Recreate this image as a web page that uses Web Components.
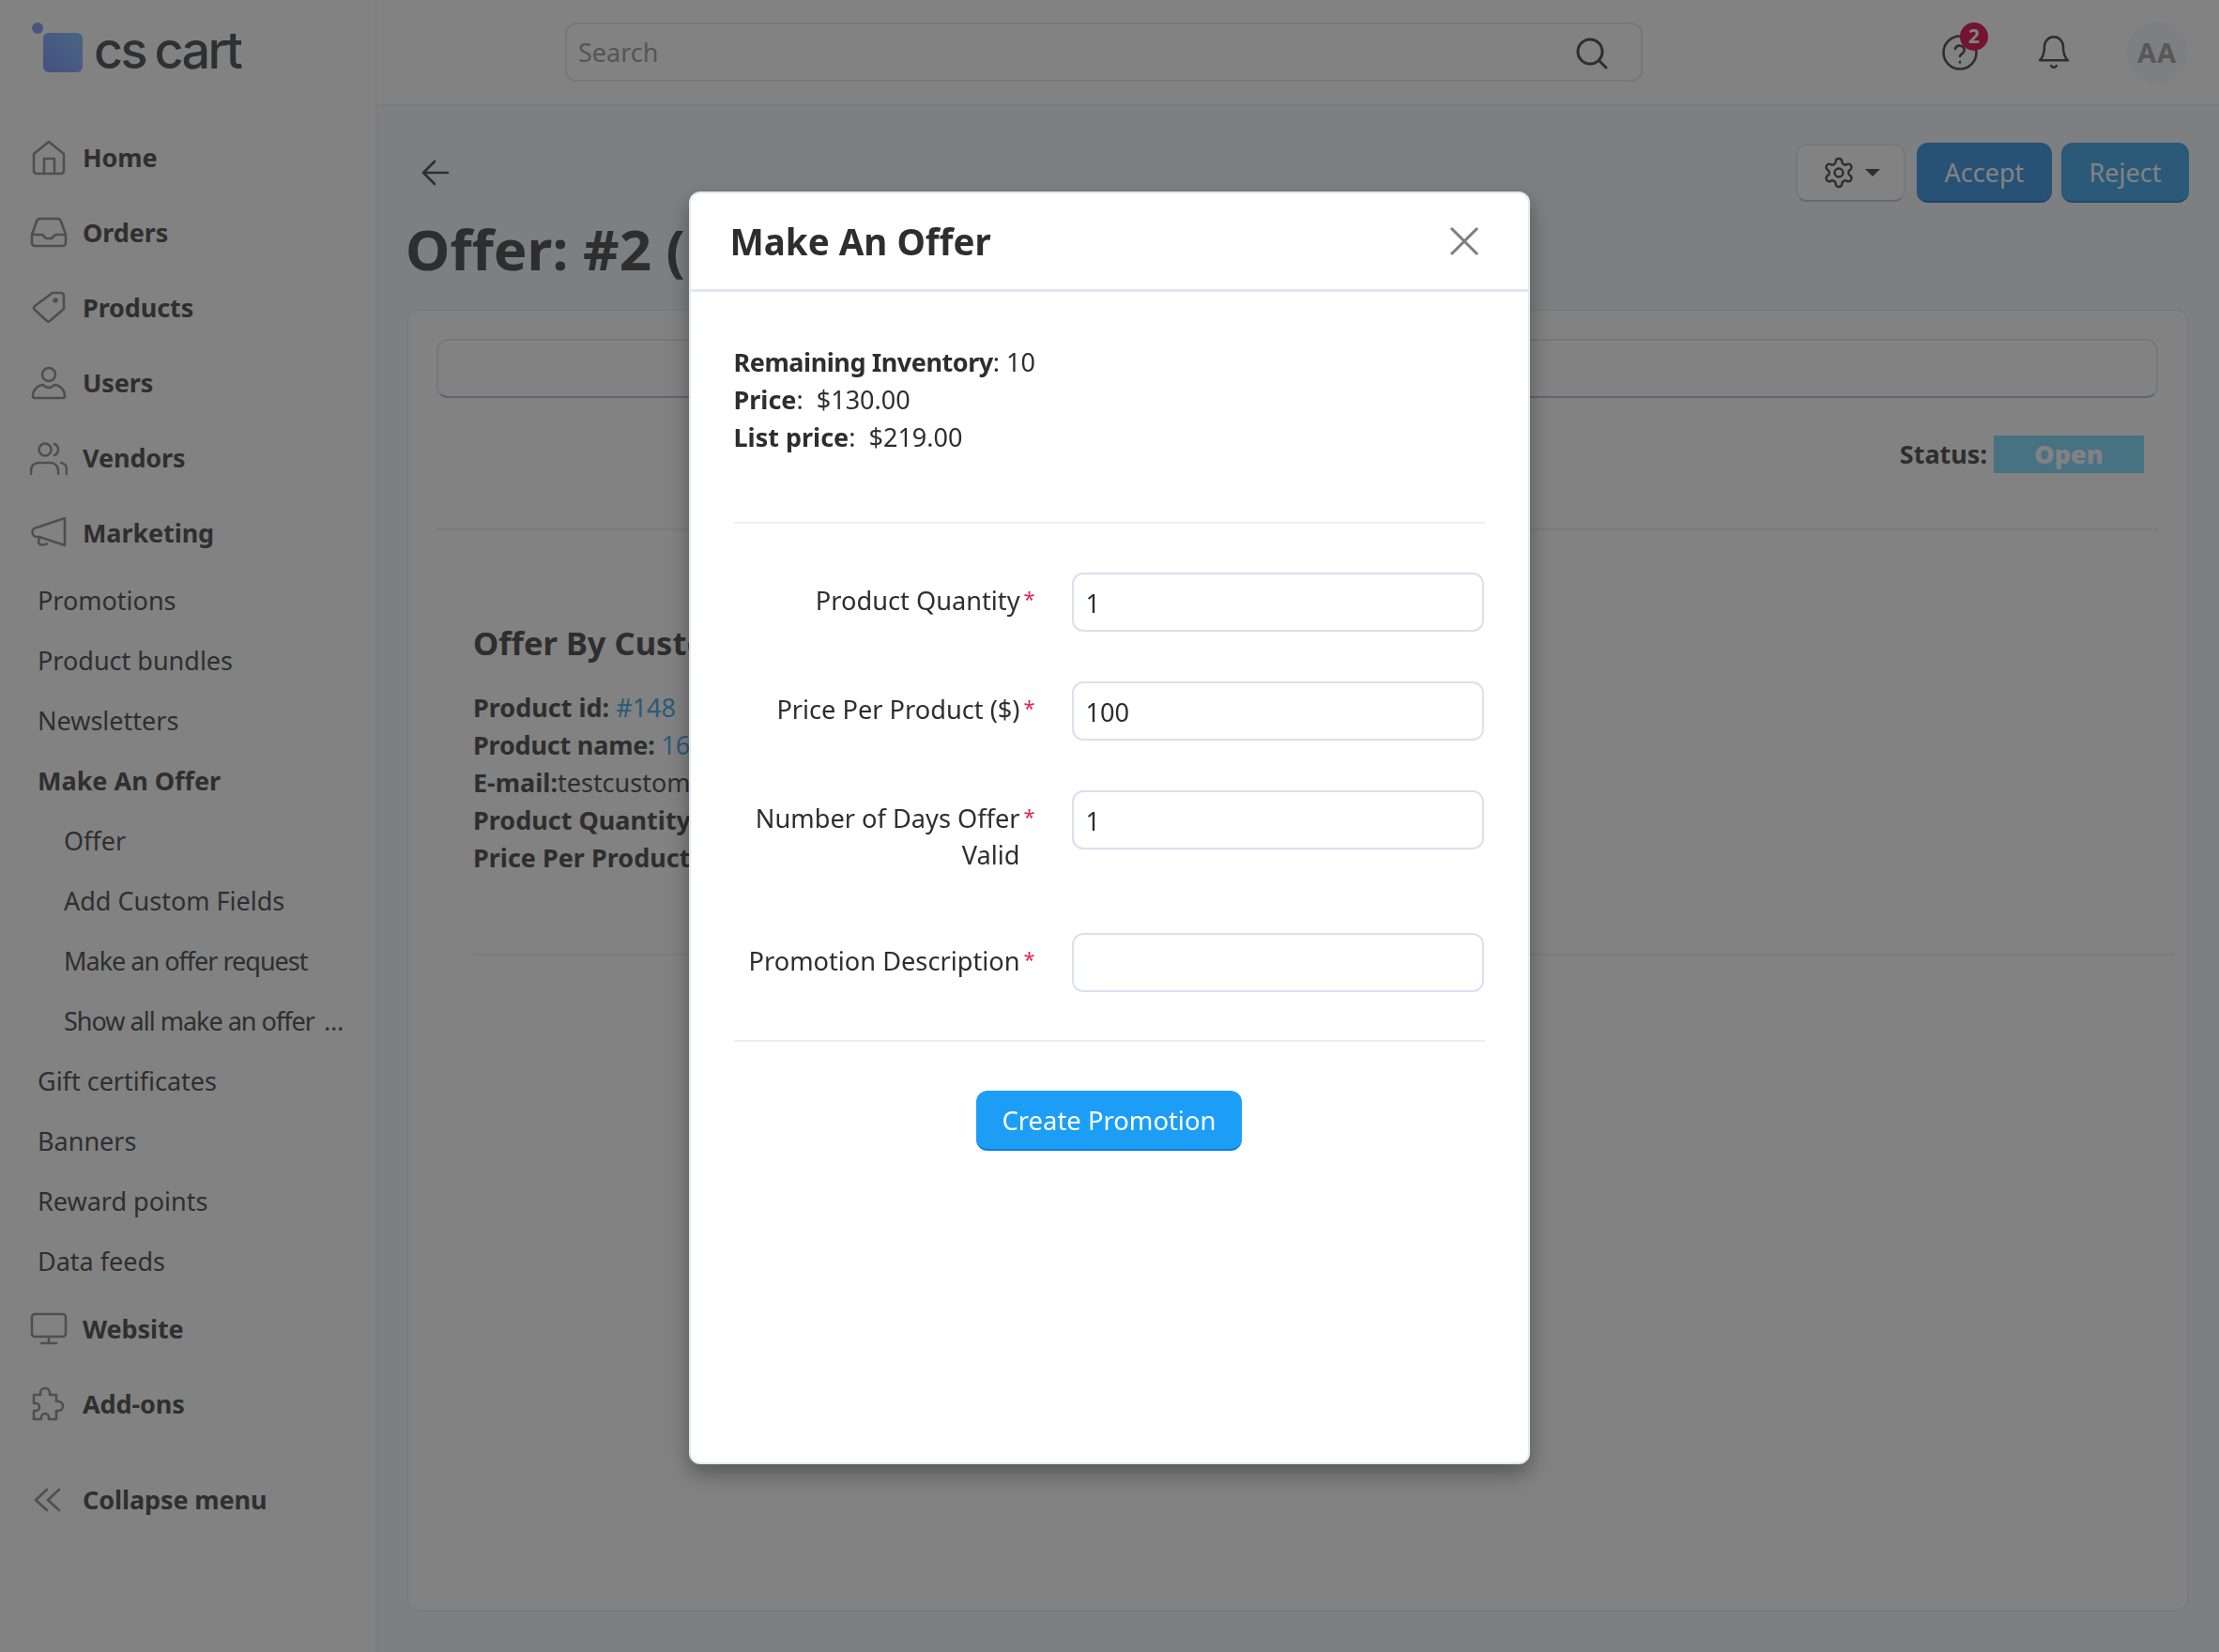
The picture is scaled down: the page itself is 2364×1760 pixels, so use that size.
<!DOCTYPE html>
<html lang="en">
<head>
<meta charset="utf-8">
<title>Make An Offer</title>
<style>
  html, body { margin: 0; height: 100%; overflow: hidden; }
  body { font-family: "Noto Sans", "Open Sans", sans-serif; color: #5a5a5a; background: #f5f9fd; }
</style>
</head>
<body>
<cs-app></cs-app>
<script>
const ICONS = {
  home: '<path d="M4 16 20 3l16 13v18a3 3 0 0 1-3 3H7a3 3 0 0 1-3-3Z"/><path d="M15 37V21h11v16"/>',
  orders: '<path d="M2 22v9a3 3 0 0 0 3 3h30a3 3 0 0 0 3-3v-9L33 8a4 4 0 0 0-4-3H11a4 4 0 0 0-4 3Z"/><path d="M2 22h11l4 4h6l4-4h11"/>',
  tag: '<path d="M5 18 24 4h9a3 3 0 0 1 3 3v14L21 34a2.4 2.4 0 0 1-3 0L5 22a2.6 2.6 0 0 1 0-4Z"/><circle cx="27" cy="12" r="1.4" fill="#a0a0a0"/>',
  user: '<circle cx="20" cy="11" r="7"/><path d="M5 36a2 2 0 0 1-2-2c0-7 6-12 11-12 2 2 4 3 6 3s4-1 6-3c5 0 11 5 11 12a2 2 0 0 1-2 2Z"/>',
  users: '<circle cx="16" cy="11" r="6.5"/><path d="M26 5a6.5 6.5 0 0 1 0 12"/><path d="M1 37v-4a8 8 0 0 1 8-8h13a8 8 0 0 1 8 8v4"/><path d="M33 25a7 7 0 0 1 6 7v5"/>',
  megaphone: '<path d="M37 4v29L10 24H8a5 5 0 0 1-1-10l2-.5Z"/><path d="M10 24.500l-1 4q0 4 4 4l5-1"/>',
  monitor: '<rect x="2" y="4" width="36" height="24" rx="3"/><path d="M20 28v7M12 35h16"/>',
  puzzle: '<path d="M4 10h7V8a5 5 0 0 1 10 0v2h7v7h2a5 5 0 0 1 0 10h-2v9h-8v-2a4 4 0 0 0-8 0v2H4v-9h2a4 4 0 0 0 0-8H4Z"/>',
  collapse: '<path d="M18 9 6 20l12 11M31 9 19 20l12 11"/>'
};

class CsNavItem extends HTMLElement {
  connectedCallback() {
    const icon = this.getAttribute('icon');
    this.attachShadow({ mode: 'open' }).innerHTML = `
      <style>
        :host { display: flex; align-items: center; height: 80px; padding-left: 32px; font-size: 27px; font-weight: 700; color: #5c5c5c; letter-spacing: -.1px; }
        svg { width: 40px; height: 40px; margin-right: 16px; fill: none; stroke: #9c9c9c; stroke-width: 2.6; stroke-linejoin: round; stroke-linecap: round; }
        span { padding-bottom: 2px; }
      </style>
      <svg viewBox="0 0 40 40">${ICONS[icon]}</svg><span><slot></slot></span>`;
  }
}
customElements.define('cs-nav-item', CsNavItem);

class CsSubItem extends HTMLElement {
  connectedCallback() {
    this.attachShadow({ mode: 'open' }).innerHTML = `
      <style>
        :host { display: flex; align-items: center; box-sizing: border-box; height: 64px; padding: 0 0 2px 40px; font-size: 27px; color: #5c5c5c; white-space: nowrap; }
        :host([nested]) { padding-left: 68px; }
        :host([active]) { font-weight: 700; }
        :host([tight]) { letter-spacing: -1px; }
      </style>
      <slot></slot>`;
  }
}
customElements.define('cs-sub-item', CsSubItem);

class CsSidebar extends HTMLElement {
  connectedCallback() {
    this.attachShadow({ mode: 'open' }).innerHTML = `
      <style>
        :host { display: block; box-sizing: border-box; width: 401px; height: 100%; background: #fff; border-right: 1px solid #f0f2f5; }
        .logo { display: flex; align-items: center; gap: 11px; height: 128px; box-sizing: border-box; padding: 0 0 22px 33px; }
        .logo svg { width: 56px; height: 58px; }
        .logo span { font: 500 54px "Inter", sans-serif; letter-spacing: -2.700px; word-spacing: -2px; color: #5b5e63; line-height: 1; margin-top: 1px; }
        .ell { letter-spacing: 1px; margin-left: 4px; }
        .collapse { margin-top: 22px; }
      </style>
      <div class="logo">
        <svg viewBox="0 0 56 58">
          <defs><linearGradient id="lg" x1="0" y1="1" x2="1" y2="0"><stop offset="0" stop-color="#8a9cff"/><stop offset="1" stop-color="#8ec8ff"/></linearGradient></defs>
          <circle cx="7" cy="6" r="6" fill="#8fa8f8"/>
          <rect x="13" y="11" width="42" height="42" rx="6" fill="url(#lg)"/>
        </svg>
        <span>cs cart</span>
      </div>
      <nav>
        <cs-nav-item icon="home">Home</cs-nav-item>
        <cs-nav-item icon="orders">Orders</cs-nav-item>
        <cs-nav-item icon="tag">Products</cs-nav-item>
        <cs-nav-item icon="user">Users</cs-nav-item>
        <cs-nav-item icon="users">Vendors</cs-nav-item>
        <cs-nav-item icon="megaphone">Marketing</cs-nav-item>
        <cs-sub-item>Promotions</cs-sub-item>
        <cs-sub-item>Product bundles</cs-sub-item>
        <cs-sub-item>Newsletters</cs-sub-item>
        <cs-sub-item active>Make An Offer</cs-sub-item>
        <cs-sub-item nested>Offer</cs-sub-item>
        <cs-sub-item nested>Add Custom Fields</cs-sub-item>
        <cs-sub-item nested tight>Make an offer request</cs-sub-item>
        <cs-sub-item nested tight>Show all make an offer&nbsp;<span class="ell">…</span></cs-sub-item>
        <cs-sub-item>Gift certificates</cs-sub-item>
        <cs-sub-item>Banners</cs-sub-item>
        <cs-sub-item>Reward points</cs-sub-item>
        <cs-sub-item>Data feeds</cs-sub-item>
        <cs-nav-item icon="monitor">Website</cs-nav-item>
        <cs-nav-item icon="puzzle">Add-ons</cs-nav-item>
        <cs-nav-item class="collapse" icon="collapse">Collapse menu</cs-nav-item>
      </nav>`;
  }
}
customElements.define('cs-sidebar', CsSidebar);

class CsTopbar extends HTMLElement {
  connectedCallback() {
    this.attachShadow({ mode: 'open' }).innerHTML = `
      <style>
        :host { display: flex; align-items: center; box-sizing: border-box; height: 113px; padding: 0 33px 0 201px; background: #fff; border-bottom: 2px solid #f2f4f7; }
        .search { display: flex; align-items: center; justify-content: space-between; box-sizing: border-box; width: 1148px; height: 63px; padding: 0 33px 0 12px; border: 2px solid #e6eaef; border-radius: 12px; font-size: 27px; color: #a8a8a8; }
        .search svg { width: 40px; height: 40px; fill: none; stroke: #5a5a5a; stroke-width: 3; stroke-linecap: round; }
        .tools { display: flex; align-items: center; margin-left: auto; }
        .help { position: relative; width: 40px; height: 40px; margin-right: 60px; }
        .help svg, .bell { display: block; width: 40px; height: 40px; fill: none; stroke: #5a5a5a; stroke-width: 2.6; stroke-linecap: round; stroke-linejoin: round; }
        .help b { position: absolute; top: -12px; right: -10px; display: grid; place-items: center; width: 30px; height: 30px; border-radius: 50%; background: #e1285f; color: #fff; font-size: 21px; line-height: 1; }
        .bell { stroke-width: 1.500; }
        .avatar { display: grid; place-items: center; width: 66px; height: 66px; margin-left: 57px; border-radius: 50%; background: #f7fafb; color: #adadad; font: 700 29px "Noto Sans", sans-serif; letter-spacing: 1px; }
      </style>
      <div class="search"><span>Search</span>
        <svg viewBox="0 0 40 40"><circle cx="19" cy="19" r="13"/><path d="m29 29 7 7"/></svg>
      </div>
      <div class="tools">
        <div class="help">
          <svg viewBox="0 0 40 40"><circle cx="20" cy="20" r="17.500"/><path d="M15 16a5 5 0 0 1 9.700 1.500c0 3.500-4.700 4-4.700 6.500"/><path d="M20 30v.5"/></svg>
          <b>2</b>
        </div>
        <svg class="bell" viewBox="0 0 24 24"><path d="M6 8a6 6 0 0 1 12 0c0 7 3 9 3 9H3s3-2 3-9"/><path d="M10.300 20.500a1.940 1.940 0 0 0 3.400 0"/></svg>
        <div class="avatar">AA</div>
      </div>`;
  }
}
customElements.define('cs-topbar', CsTopbar);

class CsButton extends HTMLElement {
  connectedCallback() {
    this.attachShadow({ mode: 'open' }).innerHTML = `
      <style>
        :host { display: inline-flex; align-items: center; justify-content: center; box-sizing: border-box; height: 64px; padding: 0 28px; border-radius: 12px; background: #2bb0ff; border-bottom: 2px solid #1a8ae8; color: #fff; font-size: 27px; white-space: nowrap; }
        :host([variant="accept"]) { background: #4fa0e8; border-bottom-color: #3f88d0; width: 144px; padding: 0; }
        :host([variant="reject"]) { background: #55b0ee; border-bottom-color: #4590d8; width: 136px; padding: 0; }
        :host([variant="create"]) { background: #1c9ef7; border-bottom: 2px solid #0b7de0; width: 283px; padding: 0; font-size: 27.400px; }
      </style>
      <slot></slot>`;
  }
}
customElements.define('cs-button', CsButton);

class CsOfferPage extends HTMLElement {
  connectedCallback() {
    this.attachShadow({ mode: 'open' }).innerHTML = `
      <style>
        :host { display: block; box-sizing: border-box; padding: 39px 32px 0; height: calc(100% - 113px); }
        .bar { display: flex; align-items: center; gap: 10px; height: 64px; }
        .back { width: 40px; height: 40px; margin: 0 auto 0 10px; fill: none; stroke: #5a5a5a; stroke-width: 2.6; stroke-linecap: round; stroke-linejoin: round; }
        .gear { display: flex; align-items: center; justify-content: center; gap: 10px; box-sizing: border-box; width: 117px; height: 62px; margin-right: 2px; background: #fff; border: 2px solid #e8ebef; border-bottom-color: #c9d0de; border-radius: 12px; }
        .gear svg { width: 36px; height: 36px; fill: none; stroke: #5a5a5a; stroke-width: 1.600; }
        .gear i { border: 8px solid transparent; border-top-color: #5a5a5a; border-bottom: 0; }
        h1 { margin: 0 0 0 -1px; height: 49px; font-size: 60px; line-height: 98px; font-weight: 700; color: #5a5a5a; white-space: nowrap; }
        .gap { height: 64px; }
        .card { box-sizing: border-box; height: 1388px; padding: 30px 31px 30px 30px; background: #fff; border: 2px solid #eef1f5; border-radius: 14px; }
        .box { height: 63px; box-sizing: border-box; border: 2px solid #e6e9ee; border-bottom-color: #bcc6dc; border-radius: 12px; }
        .status { display: flex; justify-content: flex-end; align-items: center; gap: 7px; margin-top: 40px; padding: 0 15px 59px 0; border-bottom: 2px solid #f0f2f5; font-size: 27px; font-weight: 700; color: #5a5a5a; }
        .status span { padding-bottom: 2px; }
        .status b { display: grid; place-items: center; box-sizing: border-box; width: 160px; height: 40px; padding-bottom: 2px; background: #8ce0ff; color: #fff; }
        .detail { margin: 0 -16px 0 39px; padding: 98px 0 82px; border-bottom: 2px solid #f0f2f5; font-size: 27px; line-height: 40px; color: #5a5a5a; white-space: nowrap; }
        .detail .name { letter-spacing: -.2px; }
        h2 { margin: 0 0 27px; font-size: 34.500px; line-height: 44px; font-weight: 700; }
        a { color: #55b0ee; text-decoration: none; }
      </style>
      <div class="bar">
        <svg class="back" viewBox="0 0 40 40"><path d="M34 20H8M20 8 8 20l12 12"/></svg>
        <div class="gear">
          <svg viewBox="0 0 24 24"><path d="M12.220 2h-.44a2 2 0 0 0-2 2v.18a2 2 0 0 1-1 1.730l-.43.25a2 2 0 0 1-2 0l-.15-.08a2 2 0 0 0-2.730.73l-.22.38a2 2 0 0 0 .73 2.730l.15.1a2 2 0 0 1 1 1.720v.51a2 2 0 0 1-1 1.740l-.15.09a2 2 0 0 0-.73 2.730l.22.38a2 2 0 0 0 2.730.73l.15-.08a2 2 0 0 1 2 0l.43.25a2 2 0 0 1 1 1.730V20a2 2 0 0 0 2 2h.44a2 2 0 0 0 2-2v-.18a2 2 0 0 1 1-1.730l.43-.25a2 2 0 0 1 2 0l.15.08a2 2 0 0 0 2.730-.73l.22-.39a2 2 0 0 0-.73-2.730l-.15-.08a2 2 0 0 1-1-1.740v-.5a2 2 0 0 1 1-1.740l.15-.09a2 2 0 0 0 .73-2.730l-.22-.38a2 2 0 0 0-2.730-.73l-.15.08a2 2 0 0 1-2 0l-.43-.25a2 2 0 0 1-1-1.730V4a2 2 0 0 0-2-2z"/><circle cx="12" cy="12" r="3"/></svg>
          <i></i>
        </div>
        <cs-button variant="accept">Accept</cs-button>
        <cs-button variant="reject">Reject</cs-button>
      </div>
      <h1>Offer: #2 (</h1>
      <div class="gap"></div>
      <div class="card">
        <div class="box"></div>
        <div class="status"><span>Status:</span><b>Open</b></div>
        <div class="detail">
          <h2>Offer By Customer</h2>
          <div><b>Product id:</b> <a>#148</a></div>
          <div class="name"><b>Product name:</b> <a>16</a></div>
          <div><b>E-mail:</b>testcustomer</div>
          <div><b>Product Quantity</b></div>
          <div><b>Price Per Product</b></div>
        </div>
      </div>`;
  }
}
customElements.define('cs-offer-page', CsOfferPage);

class CsField extends HTMLElement {
  connectedCallback() {
    this.attachShadow({ mode: 'open' }).innerHTML = `
      <style>
        :host { display: grid; grid-template-columns: 321px 439px; column-gap: 39px; align-items: start; font-size: 27.200px; color: #2e2e2e; }
        label { position: relative; box-sizing: border-box; padding: 10px 16px 0 0; text-align: right; line-height: 39px; }
        label i { position: absolute; top: 8px; right: 0; font-style: normal; font-size: 22px; color: #e6234f; }
        .input { box-sizing: border-box; height: 63px; padding: 0 13px; border: 2px solid #d8e1ee; border-radius: 12px; line-height: 61px; color: #2e2e2e; }
      </style>
      <label><slot></slot><i>*</i></label>
      <div class="input">${this.getAttribute('value') || ''}</div>`;
  }
}
customElements.define('cs-field', CsField);

class CsModal extends HTMLElement {
  connectedCallback() {
    this.attachShadow({ mode: 'open' }).innerHTML = `
      <style>
        :host { position: fixed; inset: 0; display: flex; justify-content: center; align-items: flex-start; background: rgba(0, 0, 0, .49); }
        .dialog { box-sizing: border-box; width: 896px; height: 1356px; margin: 204px 0 0 -1px; background: #fff; border: 2px solid #e3e8f1; border-radius: 12px; box-shadow: 0 10px 24px rgba(0, 0, 0, .35); color: #2e2e2e; }
        header { display: flex; align-items: center; justify-content: space-between; box-sizing: border-box; height: 105px; padding: 0 52px 0 42px; border-bottom: 3px solid #e2e7ef; }
        h3 { margin: 0; font-size: 38.500px; font-weight: 700; }
        header svg { width: 32px; height: 32px; fill: none; stroke: #7f7f7f; stroke-width: 3; }
        .body { padding: 55px 46px 0 46px; }
        .info { font-size: 27px; line-height: 40px; padding-bottom: 70px; border-bottom: 2px solid #eeeff1; }
        .tight { letter-spacing: -.45px; }
        cs-field { margin-top: 52px; }
        cs-field + cs-field { margin-top: 53px; }
        cs-field.tall + cs-field { margin-top: 64px; }
        .actions { display: flex; justify-content: center; margin-top: 51px; padding-top: 52px; border-top: 2px solid #eeeff1; }
      </style>
      <div class="dialog">
        <header><h3>Make An Offer</h3><svg viewBox="0 0 32 32"><path d="m2 2 28 28M30 2 2 30"/></svg></header>
        <div class="body">
          <div class="info">
            <div><b class="tight">Remaining Inventory</b>: 10</div>
            <div><b>Price</b>:&nbsp; $130.00</div>
            <div><b>List price</b>:&nbsp; $219.00</div>
          </div>
          <cs-field value="1">Product Quantity</cs-field>
          <cs-field value="100">Price Per Product ($)</cs-field>
          <cs-field class="tall" value="1">Number of Days Offer<br>Valid</cs-field>
          <cs-field value="">Promotion Description</cs-field>
          <div class="actions"><cs-button variant="create">Create Promotion</cs-button></div>
        </div>
      </div>`;
  }
}
customElements.define('cs-modal', CsModal);

class CsApp extends HTMLElement {
  connectedCallback() {
    this.attachShadow({ mode: 'open' }).innerHTML = `
      <style>
        :host { display: grid; grid-template-columns: 401px 1fr; height: 100vh; overflow: hidden; }
        main { min-width: 0; height: 100vh; }
      </style>
      <cs-sidebar></cs-sidebar>
      <main><cs-topbar></cs-topbar><cs-offer-page></cs-offer-page></main>
      <cs-modal></cs-modal>`;
  }
}
customElements.define('cs-app', CsApp);
</script>
</body>
</html>
